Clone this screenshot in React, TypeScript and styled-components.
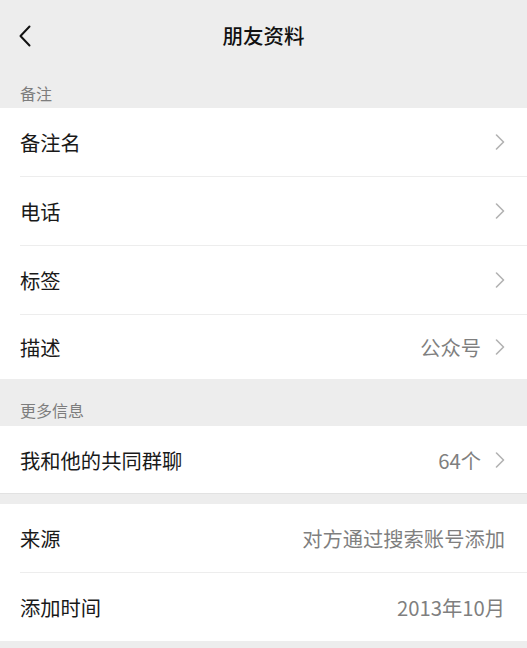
import styled, { createGlobalStyle } from "styled-components";

const GlobalStyle = createGlobalStyle`
  html, body {
    margin: 0;
    padding: 0;
    background: #ededed;
  }
  body {
    font-family: "Noto Sans CJK SC", "Noto Sans", sans-serif;
    -webkit-font-smoothing: antialiased;
  }
`;

interface Item {
  label: string;
  value?: string;
  arrow?: boolean;
  height?: number;
}

const remarkItems: Item[] = [
  { label: "备注名", arrow: true },
  { label: "电话", arrow: true },
  { label: "标签", arrow: true },
  { label: "描述", value: "公众号", arrow: true, height: 64 },
];

const moreItems: Item[] = [
  { label: "我和他的共同群聊", value: "64个", arrow: true, height: 67 },
];

const sourceItems: Item[] = [
  { label: "来源", value: "对方通过搜索账号添加" },
  { label: "添加时间", value: "2013年10月" },
];

function BackIcon() {
  return (
    <svg width="14" height="22" viewBox="0 0 14 22">
      <path
        d="M11.5 1.5 L2.5 11 L11.5 20.5"
        fill="none"
        stroke="#111"
        strokeWidth="2"
        strokeLinecap="round"
        strokeLinejoin="round"
      />
    </svg>
  );
}

function ChevronIcon() {
  return (
    <svg width="10" height="16" viewBox="0 0 10 16">
      <path
        d="M1.5 1 L8.5 8 L1.5 15"
        fill="none"
        stroke="#b2b2b2"
        strokeWidth="1.6"
        strokeLinecap="round"
        strokeLinejoin="round"
      />
    </svg>
  );
}

function Group({ items, bordered }: { items: Item[]; bordered?: boolean }) {
  return (
    <GroupBox $bordered={bordered}>
      {items.map((item, i) => (
        <Row key={item.label}>
          <RowInner
            $last={i === items.length - 1}
            style={item.height ? { height: item.height } : undefined}
          >
            <RowLabel>{item.label}</RowLabel>
            <RowRight>
              {item.value && <RowValue>{item.value}</RowValue>}
              {item.arrow && <ChevronIcon />}
            </RowRight>
          </RowInner>
        </Row>
      ))}
    </GroupBox>
  );
}

export default function App() {
  return (
    <>
      <GlobalStyle />
      <Page>
        <NavBar>
          <BackButton>
            <BackIcon />
          </BackButton>
          <Title>朋友资料</Title>
          <span />
        </NavBar>
        <SectionLabel $top={12} $bottom={4}>
          备注
        </SectionLabel>
        <Group items={remarkItems} />
        <SectionLabel $top={20} $bottom={5}>
          更多信息
        </SectionLabel>
        <Group items={moreItems} bordered />
        <Spacer />
        <Group items={sourceItems} />
      </Page>
    </>
  );
}

const Page = styled.div`
  width: 527px;
  min-height: 648px;
  background: #ededed;
  color: #191919;
`;

const NavBar = styled.div`
  height: 70px;
  display: grid;
  grid-template-columns: 80px 1fr 80px;
  align-items: center;
`;

const BackButton = styled.div`
  display: flex;
  align-items: center;
  padding-left: 18px;
  padding-top: 2px;
`;

const Title = styled.div`
  text-align: center;
  font-size: 20.5px;
  font-weight: 500;
  line-height: 28px;
  color: #111;
`;

const SectionLabel = styled.div<{ $top: number; $bottom: number }>`
  padding: ${(p) => p.$top}px 20px ${(p) => p.$bottom}px;
  font-size: 16px;
  line-height: 22px;
  color: #7d7d7d;
`;

const GroupBox = styled.div<{ $bordered?: boolean }>`
  background: #fff;
  border-bottom: ${(p) => (p.$bordered ? "1px solid #e2e2e2" : "none")};
`;

const Row = styled.div`
  padding-left: 20px;
`;

const RowInner = styled.div<{ $last: boolean }>`
  height: 68px;
  display: flex;
  align-items: center;
  justify-content: space-between;
  padding-right: 22px;
  border-bottom: ${(p) => (p.$last ? "none" : "1px solid #ededed")};
`;

const RowLabel = styled.div`
  font-size: 20.3px;
  line-height: 28px;
  color: #191919;
`;

const RowRight = styled.div`
  display: flex;
  align-items: center;
  gap: 14px;
`;

const RowValue = styled.div`
  font-size: 20.3px;
  line-height: 28px;
  color: #7f7f7f;
`;

const Spacer = styled.div`
  height: 10px;
`;
